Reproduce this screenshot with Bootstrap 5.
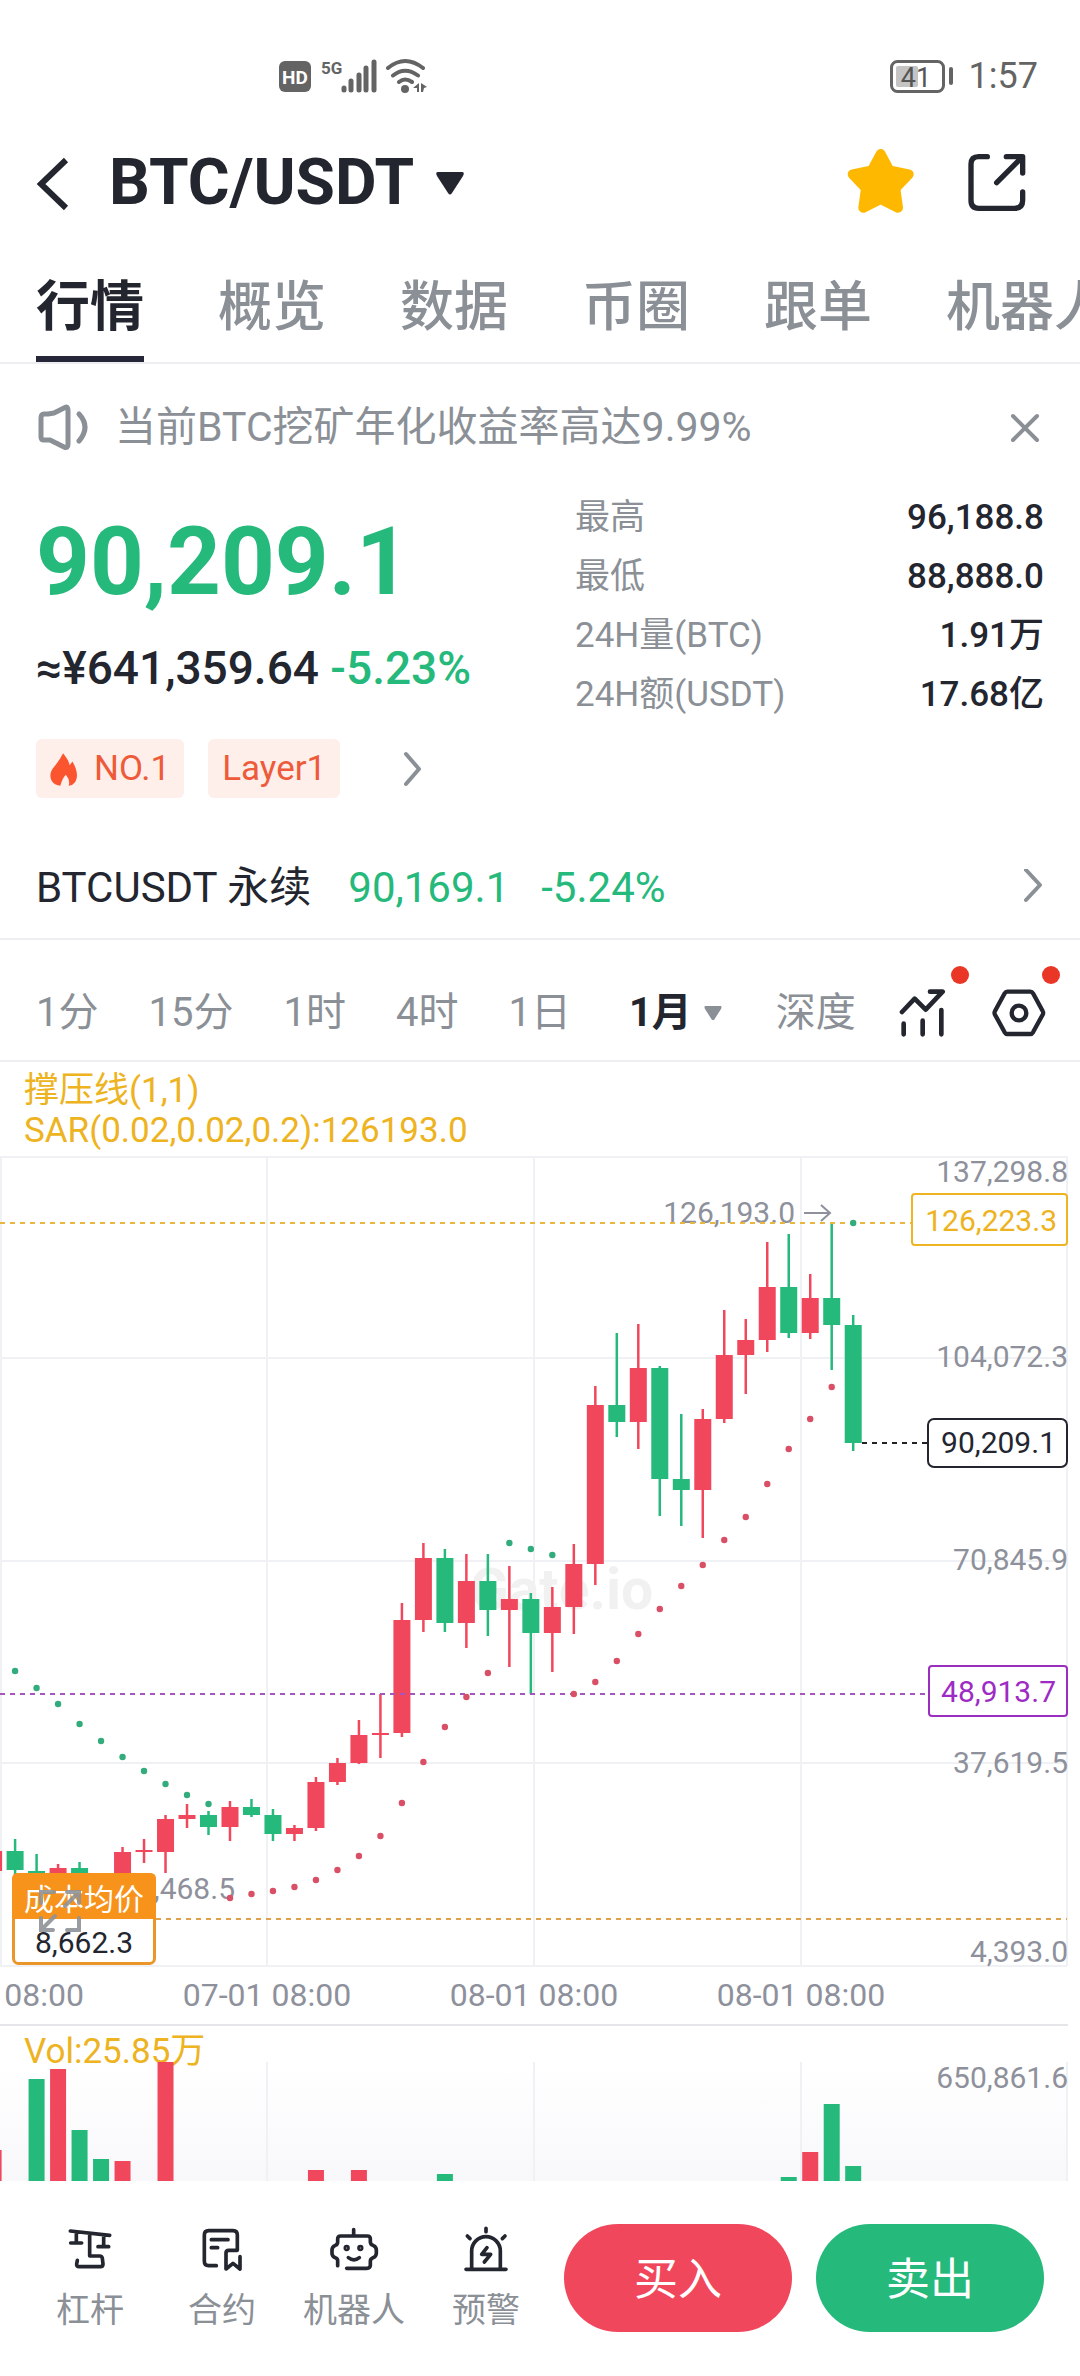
<!DOCTYPE html>
<html lang="zh-CN">
<head>
<meta charset="utf-8">
<meta name="viewport" content="width=device-width, initial-scale=1">
<title>BTC/USDT</title>
<link href="https://cdn.jsdelivr.net/npm/bootstrap@5.3.0/dist/css/bootstrap.min.css" rel="stylesheet">
<style>
:root{--ink:#23262f;--muted:#8b9097;--up:#f1475d;--down:#25b97c;--line:#eeeef1}
body{font-family:Roboto,"Noto Sans CJK SC",sans-serif;color:var(--ink);background:#fff;overflow-x:hidden}
svg{display:block;flex:none}
button,a{color:inherit}
.plain-btn{background:none;border:0;padding:0;color:inherit;font-weight:inherit;line-height:inherit}
.edge{padding-left:36px;padding-right:36px}
.stroke{fill:none;stroke:currentColor;stroke-linecap:round;stroke-linejoin:round}
.status-bar{height:120px;padding-top:32px;padding-right:42px;color:#646464}
.status-icons{margin-left:243px}
.status-time{font-size:36px;line-height:44px}
.title-bar{height:126px}
.pair-name{font-size:64px;line-height:76px;font-weight:700;gap:20px;margin-left:39px}
.star-btn{margin-right:51px}
.section-tabs{gap:74px;border-bottom:2px solid var(--line);overflow:hidden}
.section-tabs a{font-size:54px;line-height:96px;font-weight:500;color:var(--muted);text-decoration:none;white-space:nowrap;padding-top:14px;border-bottom:6px solid transparent}
.section-tabs a.active{color:var(--ink);font-weight:700;border-color:#252638}
.notice{height:124px;padding-top:4px;gap:25px;font-size:41px;color:var(--muted)}
.last-price{font-size:94px;line-height:112px;font-weight:700;color:var(--down);margin-top:18px}
.fiat-row{font-size:46px;line-height:60px;font-weight:500;margin-top:20px}
.tags-row{margin-top:41px;gap:24px}
.tag-chip{height:59px;padding:2px 14px 0;border-radius:6px;background:#feefeb;color:#ee5b3a;font-size:35px;text-decoration:none}
.tags-more{margin-left:38px}
.stats-col{width:469px;font-size:35px;line-height:59px}
.stats-col dt{font-weight:400;color:var(--muted)}
.stats-col dd{font-weight:500}
.perp-row{margin-top:38px;height:104px;font-size:42px;border-bottom:2px solid var(--line);text-decoration:none}
.perp-price{margin:0 32px 0 37px}
.down-text{color:var(--down)}
.interval-bar{height:122px;padding-top:26px;border-bottom:2px solid var(--line);font-size:40px;color:var(--muted);padding-right:34px}
.interval-bar .picked{color:var(--ink);font-weight:700;gap:12px}
.interval-list{gap:50px}
.interval-tools{gap:46px;color:var(--ink)}
.red-dot{position:absolute;width:18px;height:18px;border-radius:50%;background:#e93627;top:-22px;right:-23px}
.red-dot.near{right:-14px}
.legend{padding:9px 24px 5px;font-size:35px;line-height:40px;color:#edb321}
.chart{overflow:visible}
.chart text{font-family:Roboto,"Noto Sans CJK SC",sans-serif;font-size:30px;fill:#8e919c}
.chart .sum{font-size:35px;fill:#edb321}
.chart .hours text{font-size:32px}
.action-bar{padding:43px 36px 44px 24px}
.tool-link{font-size:34px;line-height:40px;color:var(--muted);text-decoration:none}
.tool-link svg{color:var(--ink);margin-bottom:16px}
.trade-btn,.trade-btn:hover{width:228px;height:108px;padding-top:10px;color:#fff;font-size:44px;border:0}
.trade-buy,.trade-buy:hover{background:var(--up)}
.trade-sell,.trade-sell:hover{background:var(--down)}
</style>
<script src="https://cdn.jsdelivr.net/npm/bootstrap@5.3.0/dist/js/bootstrap.bundle.min.js"></script>
</head>
<body>
<header>
  <div class="status-bar d-flex align-items-center justify-content-between edge">
    <svg class="status-icons" width="150" height="36" viewBox="279 58 150 36" aria-label="HD 5G">
      <rect x="279" y="61" width="32" height="31" rx="6" fill="#646464"/>
      <text x="295" y="84" text-anchor="middle" font-size="19" font-weight="700" fill="#fff">HD</text>
      <text x="321" y="74" font-size="17" font-weight="700" fill="#646464">5G</text>
      <g stroke="#646464" stroke-width="5" stroke-linecap="round"><path d="M344 88v2M351 81v9M359 75v15M366 68v22M374 62v28"/></g>
      <g fill="none" stroke="#646464" stroke-width="4" stroke-linecap="round"><path d="M388 68Q405 54 423 68M393 75.500Q405 66 418 75.500M399 82Q405 77 412 82"/></g>
      <circle cx="405" cy="89" r="4" fill="#646464"/><path d="M413 88l6-5v9h-2v-4zM421 83l6 4-3 1-1 4h-2z" fill="#646464"/>
    </svg>
    <div class="d-flex align-items-center gap-3">
      <svg width="64" height="34" viewBox="891 59 64 34" aria-label="41"><rect x="893.500" y="61.500" width="52" height="30" rx="6" fill="none" stroke="#646464" stroke-width="3"/><rect x="898" y="66" width="22" height="21" rx="2" fill="#c4c4c4"/><text x="918" y="87" text-anchor="middle" font-size="27" fill="#555">41</text><path d="M953 69v14" stroke="#646464" stroke-width="4" stroke-linecap="round"/></svg>
      <span class="status-time">1:57</span>
    </div>
  </div>
  <div class="title-bar d-flex align-items-center edge">
    <button class="plain-btn" aria-label="返回"><svg class="stroke" width="34" height="56" viewBox="36 155 34 56" stroke-width="6"><path d="M66 160L41 184L66 208" stroke-linecap="butt" stroke-linejoin="miter"/></svg></button>
    <button class="plain-btn pair-name d-flex align-items-center flex-grow-1">BTC/USDT<svg width="32" height="26" viewBox="0 0 32 26"><path d="M4 2h24q3 0 1 4L18 23q-2 3-4 0L3 6Q1 2 4 2z" fill="currentColor"/></svg></button>
    <button class="plain-btn star-btn" aria-label="收藏"><svg width="70" height="68" viewBox="44 327 210 204"><path d="M151 342L177 391L235 403L195 445L203 503L151 477L99 503L107 445L67 403L125 391Z" fill="#ffb800" stroke="#ffb800" stroke-width="30" stroke-linejoin="round"/></svg></button>
    <button class="plain-btn me-3" aria-label="分享"><svg class="stroke" width="62" height="62" viewBox="410 335 186 186" stroke-width="16"><path d="M474 349H448Q425 349 425 372V480Q425 504 448 504H556Q580 504 580 480V455M531 349H580V398M577 352L502 427"/></svg></button>
  </div>
  <nav class="section-tabs d-flex edge">
    <a class="active" href="#">行情</a><a href="#">概览</a><a href="#">数据</a><a href="#">币圈</a><a href="#">跟单</a><a href="#">机器人</a>
  </nav>
</header>
<main>
  <div class="notice d-flex align-items-center edge">
    <svg class="stroke" width="54" height="48" viewBox="36 403 54 48" stroke-width="5"><path d="M48 413H44Q41 413 41 417V436Q41 439 44 439H50L64 446Q68 448 68 443V410Q68 404 64 407L54 412zM79 413Q91 426 79 440"/></svg>
    <span>当前BTC挖矿年化收益率高达9.99%</span>
    <button class="plain-btn ms-auto" aria-label="关闭"><svg class="stroke" width="40" height="32" viewBox="0 0 40 32" stroke-width="4"><path d="M9 4l24 24M33 4L9 28"/></svg></button>
  </div>
  <section class="d-flex justify-content-between edge">
    <div>
      <div class="last-price">90,209.1</div>
      <div class="fiat-row">≈¥641,359.64 <span class="down-text">-5.23%</span></div>
      <div class="tags-row d-flex align-items-center">
        <a class="tag-chip d-flex align-items-center" href="#"><svg class="me-3" width="28" height="36" viewBox="0 0 30 36"><path d="M14 0C17 4 20 7 21 13L24 9C29 17 31 26 26 32Q24 35 20 35Q22 29 17 23Q13 27 11 35C-1 33-2 22 4 15Q10 8 14 0Z" fill="#fb5530"/></svg>NO.1</a>
        <a class="tag-chip d-flex align-items-center" href="#">Layer1</a>
        <button class="plain-btn tags-more" aria-label="更多"><svg class="stroke" width="22" height="36" viewBox="0 0 22 36" stroke-width="4" color="#8b9097"><path d="M4 3l13 15L4 33"/></svg></button>
      </div>
    </div>
    <div class="stats-col">
      <dl class="m-0">
        <div class="d-flex justify-content-between"><dt>最高</dt><dd class="m-0">96,188.8</dd></div>
        <div class="d-flex justify-content-between"><dt>最低</dt><dd class="m-0">88,888.0</dd></div>
        <div class="d-flex justify-content-between"><dt>24H量(BTC)</dt><dd class="m-0">1.91万</dd></div>
        <div class="d-flex justify-content-between"><dt>24H额(USDT)</dt><dd class="m-0">17.68亿</dd></div>
      </dl>
    </div>
  </section>
  <a class="perp-row d-flex align-items-center edge" href="#">
    <span>BTCUSDT 永续</span><span class="down-text perp-price">90,169.1</span><span class="down-text">-5.24%</span>
    <svg class="stroke ms-auto" width="22" height="36" viewBox="0 2 22 36" stroke-width="4" color="#8b9097"><path d="M4 3l14 15L4 33"/></svg>
  </a>
  <div class="interval-bar d-flex align-items-center justify-content-between edge">
    <div class="interval-list d-flex align-items-center">
      <button class="plain-btn">1分</button><button class="plain-btn">15分</button><button class="plain-btn">1时</button><button class="plain-btn">4时</button><button class="plain-btn">1日</button>
      <button class="plain-btn picked d-flex align-items-center ms-2 me-1">1月<svg width="18" height="15" viewBox="0 0 18 15"><path d="M1 0h16q1 1 0 3L10 14H8L1 3Q0 1 1 0z" fill="#8b9097"/></svg></button>
      <button class="plain-btn">深度</button>
    </div>
    <div class="interval-tools d-flex align-items-center">
      <button class="plain-btn position-relative" aria-label="指标"><svg class="stroke" width="48" height="50" viewBox="75 112 144 150" stroke-width="14"><path d="M87 184L125 144L158 177L209 123H171M92 219V251M149 210V251M205 178V251"/></svg><span class="red-dot"></span></button>
      <button class="plain-btn position-relative" aria-label="设置"><svg class="stroke" width="54" height="50" viewBox="359 109 162 150" stroke-width="13"><path d="M405 120H474Q479 120 482 125L511 178Q514 183 511 189L482 242Q479 247 474 247H405Q400 247 397 242L368 189Q365 183 368 178L397 125Q400 120 405 120z"/><circle cx="440" cy="184" r="22"/></svg><span class="red-dot near"></span></button>
    </div>
  </div>
  <div class="legend">撑压线(1,1)<br>SAR(0.02,0.02,0.2):126193.0</div>
  <svg class="chart w-100" viewBox="0 1156 1080 1025" role="img" aria-label="BTC/USDT K线图">
    <defs><linearGradient id="volShade" x1="0" y1="0" x2="0" y2="1"><stop offset="0" stop-color="#fff"/><stop offset="1" stop-color="#f8f8fb"/></linearGradient></defs>
    <rect x="0" y="2062" width="1067" height="119" fill="url(#volShade)"/>
    <g stroke="#f0f1f5" stroke-width="2" fill="none">
      <path d="M0 1157H1067M0 1358H1067M0 1561H1067M0 1763H1067M0 1966H1067M1 1156V1966M267 1156V1966M534 1156V1966M801 1156V1966M1067 1156V1966M267 2062V2181M534 2062V2181M801 2062V2181M1067 2062V2181"/>
      <path d="M0 2025H1068" stroke="#e6e6ea"/>
    </g>
    <text x="470" y="1609" style="font-size:57px;font-weight:700;fill:#f1f1f2">Gate.io</text>
    <g text-anchor="end">
      <text x="1068" y="1182">137,298.8</text><text x="1068" y="1367">104,072.3</text><text x="1068" y="1570">70,845.9</text><text x="1068" y="1773">37,619.5</text><text x="1068" y="1962">4,393.0</text><text x="1068" y="2088">650,861.6</text>
      <text x="795" y="1223">126,193.0</text><text x="235" y="1899">,468.5</text>
    </g>
    <g class="hours" text-anchor="middle"><text x="84" y="2006" text-anchor="end">08:00</text><text x="267" y="2006">07-01 08:00</text><text x="534" y="2006">08-01 08:00</text><text x="801" y="2006">08-01 08:00</text></g>
    <path d="M804 1213H829M821 1205L830 1213L821 1221" fill="none" stroke="#8e919c" stroke-width="2"/>
    <text class="sum" x="24" y="2063">Vol:25.85万</text>
    <g id="candles"></g>
    <g fill="none" stroke-width="2" stroke-dasharray="5 5">
      <path d="M0 1223H911" stroke="#e9b640"/><path d="M0 1694H928" stroke="#a557bd"/><path d="M156 1919H1067" stroke="#dfa24b"/><path d="M862 1443H927" stroke="#222"/>
    </g>
    <g id="sar"></g>
    <g fill="#fff" stroke-width="2">
      <rect x="912" y="1194" width="155" height="51" rx="3" stroke="#eeb422"/><rect x="928" y="1419" width="139" height="48" rx="6" stroke="#23262f"/><rect x="929" y="1666" width="138" height="50" rx="3" stroke="#9a2fbf"/>
    </g>
    <g text-anchor="end"><text x="1057" y="1231" style="fill:#edb321">126,223.3</text><text x="1056" y="1453" style="fill:#23262f">90,209.1</text><text x="1056" y="1702" style="fill:#9d2bc4">48,913.7</text></g>
    <rect x="13.500" y="1874.500" width="141" height="89" rx="5" fill="#fff" stroke="#ea962b" stroke-width="3"/>
    <path d="M12 1919V1879Q12 1873 18 1873H150Q156 1873 156 1879V1919z" fill="#f7931a"/>
    <text x="84" y="1910" text-anchor="middle" style="fill:#fff">成本均价</text><text x="84" y="1953" text-anchor="middle" style="fill:#23262f">8,662.3</text>
    <path d="M41 1903V1892H54M67 1892H79V1903M78 1893L65 1906M41 1918V1930H53M42 1929L55 1916M79 1918V1930H67" fill="none" stroke="#8e9297" stroke-width="4" stroke-linecap="round" opacity=".9"/>
  </svg>
</main>
<footer class="action-bar d-flex align-items-start">
  <nav class="d-flex flex-grow-1 me-2 pe-1">
    <a class="tool-link d-flex flex-column align-items-center flex-fill w-25" href="#"><svg class="stroke" width="50" height="50" viewBox="106 70 150 150" stroke-width="11"><path d="M122 91L240 104M140 94V127M123 127H156M222 104V138M205 138H237M180 98V166H210Q217 166 218 173L220 190Q220 198 212 198H148Q140 198 141 190L143 179"/></svg>杠杆</a>
    <a class="tool-link d-flex flex-column align-items-center flex-fill w-25" href="#"><svg class="stroke" width="50" height="50" viewBox="500 70 150 150" stroke-width="11"><path d="M558 195H535Q522 195 522 182V103Q522 90 535 90H608Q621 90 621 103V149H595Q587 149 587 157V205L608 188L629 205V168M543 117H593M543 141H562"/></svg>合约</a>
    <a class="tool-link d-flex flex-column align-items-center flex-fill w-25" href="#"><svg class="stroke" width="50" height="50" viewBox="897 70 150 150" stroke-width="11"><path d="M923 195V180Q923 173 916 171Q906 168 906 158V148Q906 138 916 134Q923 132 923 124V115Q923 106 932 106H1012Q1021 106 1021 115V124Q1022 132 1029 134Q1039 138 1039 148V158Q1039 168 1029 171Q1021 174 1021 182V194Q1021 203 1010 203H950M971 103V87M955 171Q972 184 988 171"/><circle cx="950" cy="142" r="4"/><circle cx="991" cy="142" r="4"/></svg>机器人</a>
    <a class="tool-link d-flex flex-column align-items-center flex-fill w-25" href="#"><svg class="stroke" width="50" height="50" viewBox="1293 70 150 150" stroke-width="11"><path d="M1325 203V151A43 43 0 0 1 1411 151V203M1308 206H1428M1368 83V93M1312 106L1320 114M1425 106L1417 114M1371 141L1355 161H1382L1363 184"/></svg>预警</a>
  </nav>
  <button class="btn rounded-pill trade-btn trade-buy">买入</button>
  <button class="btn rounded-pill trade-btn trade-sell ms-4">卖出</button>
</footer>
<script>
// Candles, oldest first: [bars before the latest, u = up / d = down, high, open/close top, open/close bottom, low] on the chart's y scale.
const candles=[[40,'u',1851,1851,1871,1871],[39,'d',1839,1851,1870,1876],[38,'d',1854,1871,1880,1880],[37,'u',1864,1868,1885,1885],[36,'d',1862,1868,1885,1885],[34,'u',1847,1852,1876,1876],[33,'u',1839,1850,1852,1863],[32,'u',1815,1819,1852,1873],[31,'u',1804,1815,1819,1828],[30,'d',1811,1815,1827,1835],[29,'u',1801,1807,1827,1841],[28,'d',1799,1807,1815,1817],[27,'d',1809,1815,1834,1841],[26,'u',1825,1828,1834,1841],[25,'u',1777,1782,1828,1831],[24,'u',1758,1763,1782,1785],[23,'u',1720,1735,1763,1764],[22,'u',1694,1733,1735,1758],[21,'u',1603,1620,1733,1737],[20,'u',1543,1558,1620,1632],[19,'d',1549,1558,1623,1632],[18,'u',1554,1581,1623,1648],[17,'d',1554,1581,1610,1636],[16,'u',1566,1599,1610,1667],[15,'d',1593,1599,1633,1694],[14,'u',1587,1607,1633,1672],[13,'u',1544,1564,1607,1634],[12,'u',1386,1405,1564,1585],[11,'d',1333,1405,1422,1437],[10,'u',1324,1368,1422,1449],[9,'d',1366,1368,1479,1516],[8,'d',1414,1479,1490,1526],[7,'u',1409,1419,1490,1538],[6,'u',1310,1355,1419,1423],[5,'u',1319,1340,1355,1394],[4,'u',1242,1287,1340,1352],[3,'d',1234,1287,1333,1338],[2,'u',1274,1298,1333,1339],[1,'d',1223,1298,1325,1370],[0,'d',1315,1325,1443,1451]];
const volumes=[[40,'u',2150],[38,'d',2079],[37,'u',2069],[36,'d',2130],[35,'d',2159],[34,'u',2161],[32,'u',2062],[25,'u',2170],[23,'u',2170],[19,'d',2174],[3,'d',2177],[2,'u',2152],[1,'d',2104],[0,'d',2166]];
const sarDown=[[39,1671],[38,1688],[37,1704],[36,1724],[35,1741],[34,1757],[33,1771],[32,1784],[31,1795],[30,1804],[16,1543],[15,1549],[14,1555],[0,1223]];
const sarUp=[[29,1898],[28,1894],[27,1891],[26,1887],[25,1880],[24,1870],[23,1856],[22,1836],[21,1803],[20,1762],[19,1727],[18,1697],[17,1673],[13,1694],[12,1682],[11,1661],[10,1634],[9,1609],[8,1586],[7,1565],[6,1540],[5,1517],[4,1484],[3,1449],[2,1419],[1,1387]];
const tone={u:'#f1475d',d:'#25b97c'};
const xOf=k=>853.2-21.49*k;
document.getElementById('candles').innerHTML=
  candles.map(([k,t,h,a,b,l])=>`<path d="M${xOf(k)} ${h}V${l}" stroke="${tone[t]}" stroke-width="2.5"/><rect x="${xOf(k)-8.5}" y="${a}" width="17" height="${b-a}" fill="${tone[t]}"/>`).join('')+
  volumes.map(([k,t,y])=>`<rect x="${xOf(k)-8}" y="${y}" width="16" height="${2181-y}" fill="${tone[t]}"/>`).join('');
const dots=(list,c)=>list.map(([k,y])=>`<circle cx="${xOf(k)}" cy="${y}" r="3.2" fill="${c}"/>`).join('');
document.getElementById('sar').innerHTML=dots(sarDown,'#33ac7d')+dots(sarUp,'#d94f65');
</script>
</body>
</html>
